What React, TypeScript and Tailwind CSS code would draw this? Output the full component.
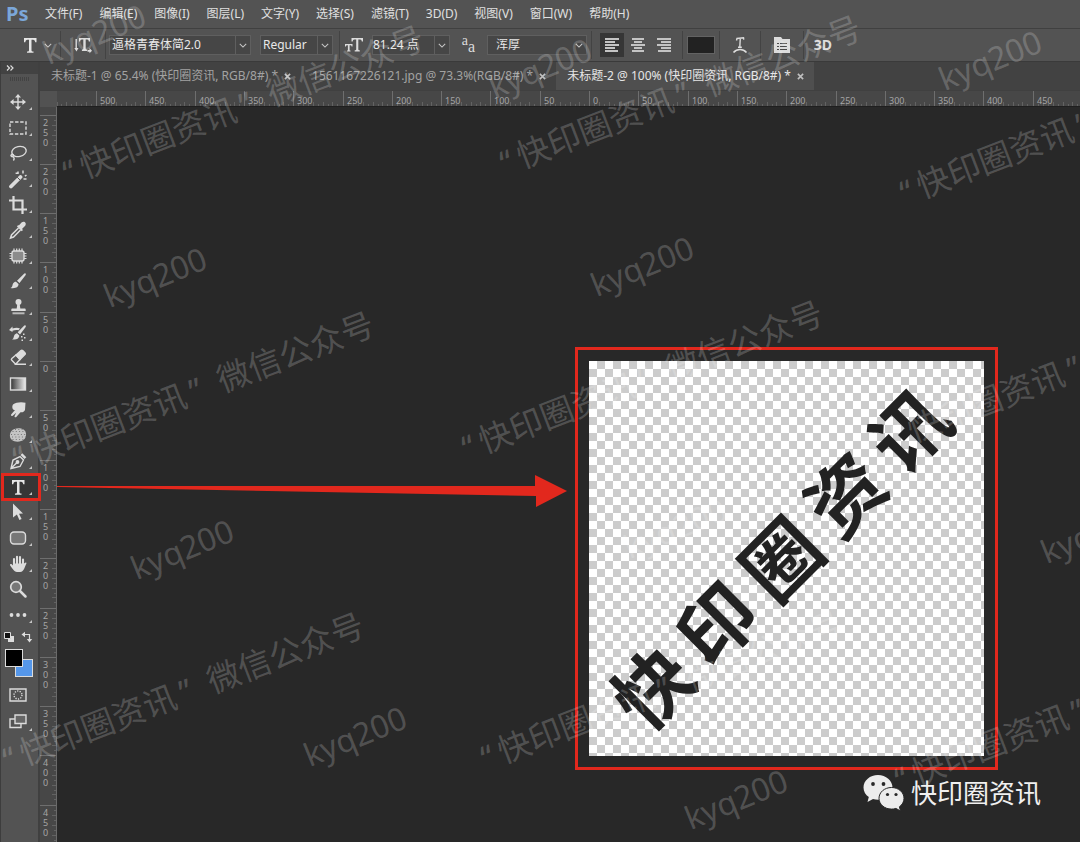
import type { ReactNode } from "react";

const menus = [
  "文件(F)",
  "编辑(E)",
  "图像(I)",
  "图层(L)",
  "文字(Y)",
  "选择(S)",
  "滤镜(T)",
  "3D(D)",
  "视图(V)",
  "窗口(W)",
  "帮助(H)",
];

const tabs = [
  { title: "未标题-1 @ 65.4% (快印圈资讯, RGB/8#) *", active: false },
  { title: "1561167226121.jpg @ 73.3%(RGB/8#) *", active: false },
  { title: "未标题-2 @ 100% (快印圈资讯, RGB/8#) *", active: true },
];

const Icon = ({ children }: { children: ReactNode }) => (
  <svg
    viewBox="0 0 20 20"
    className="h-5 w-5"
    fill="none"
    stroke="#dcdcdc"
    strokeWidth="1.4"
    aria-hidden="true"
  >
    {children}
  </svg>
);

const tools: { name: string; icon: ReactNode; plain?: boolean }[] = [
  {
    name: "Move",
    icon: (
      <>
        <path d="M10 4v12M4 10h12" />
        <path
          d="M10 2l3 3.6H7zM10 18l3-3.6H7zM2 10l3.6-3v6zM18 10l-3.6-3v6z"
          fill="#dcdcdc"
          stroke="none"
        />
      </>
    ),
  },
  {
    name: "Marquee",
    icon: <path d="M2 4h16v12H2z" strokeDasharray="3.4 1.7" />,
  },
  {
    name: "Lasso",
    icon: (
      <>
        <ellipse cx="11" cy="8.5" rx="7.3" ry="5" transform="rotate(-12 11 8.5)" />
        <path d="M4.5 11.5c-1.5 0-2 1-1.2 1.7s2.2.2 2.2-.8-.5-1-1-.9M4.5 13.5c2 .8 2 2.5.9 4" />
      </>
    ),
  },
  {
    name: "Magic Wand",
    icon: (
      <>
        <path d="M3 17.5L12.5 8" strokeWidth="3.8" strokeLinecap="round" />
        <path d="M9.2 8.2l3.4 3.4" stroke="#535353" strokeWidth="1" />
        <path d="M10 2.6v2.4M15 1.6v3M18.5 6l-1.6 1.2M15.5 10h3M7.6 4.3h2.6" strokeWidth="1.5" />
      </>
    ),
  },
  {
    name: "Crop",
    icon: <path d="M5.5 1v13.5H19M1 5.5h13.5V19" strokeWidth="2.2" />,
  },
  {
    name: "Eyedropper",
    icon: (
      <>
        <path d="M10.5 8L3.5 15l-1 3 3-1 7-7" strokeWidth="1.5" />
        <path
          d="M9 6.5l4.7 4.7 1.3-1.3-1-1 3.2-3.2c1.8-2.5-.9-5.2-3.4-3.4L10.8 5.5l-.7-.5z"
          fill="#dcdcdc"
          stroke="none"
        />
      </>
    ),
  },
  {
    name: "Patch",
    icon: (
      <>
        <rect x="4" y="5" width="12" height="10" rx="2" fill="#8b8b8b" />
        <path
          d="M6 2.5v2.5M8.7 2.5v2.5M11.3 2.5v2.5M14 2.5v2.5M6 15v2.5M8.7 15v2.5M11.3 15v2.5M14 15v2.5M1.5 7.5H4M1.5 10H4M1.5 12.5H4M16 7.5h2.5M16 10h2.5M16 12.5h2.5"
          strokeWidth="1.2"
        />
      </>
    ),
  },
  {
    name: "Brush",
    icon: (
      <g fill="#dcdcdc" stroke="none">
        <path d="M17.5 2.5c.6.4.4 1 0 1.7L11.5 12 9 9.7l6.8-6.8c.6-.6 1.2-.8 1.7-.4z" />
        <path d="M8 10.7l2.5 2.4c.3 2.7-2.500 4.700-8 3.900 2.200-1 1.700-3 2.700-4.800.6-1 1.700-1.600 2.800-1.500z" />
      </g>
    ),
  },
  {
    name: "Clone Stamp",
    icon: (
      <g fill="#dcdcdc" stroke="none">
        <circle cx="10.5" cy="5" r="3" />
        <path d="M9.3 7h2.4l.6 4.5h4.2c.8 0 1.2.5 1.2 1.3V14H3.3v-1.2c0-.8.5-1.3 1.2-1.3h4.2z" />
        <path d="M4.5 15.3h12v2h-12z" opacity=".75" />
      </g>
    ),
  },
  {
    name: "History Brush",
    icon: (
      <g fill="#dcdcdc" stroke="none">
        <path d="M17.5 2.5c.6.4.4 1 0 1.7L12 11.5 9.7 9.2l6.1-6.3c.6-.6 1.2-.8 1.7-.4zM9 10.2l2.3 2.3c0 2.6-2.3 4.5-7.3 4 2-1 1.5-2.8 2.3-4.3.6-1 1.7-1.9 2.7-2z" />
        <path d="M1 7L4.500 3.500v2c3-1 5.500-1 7.500 0L10.500 7.200C8.500 6.700 6.500 6.900 4.500 7.800V9z" />
        <path d="M15 10.5h1.5V12H15zM13 13h1.5v1.5H13zM16 14h1.5v1.5H16zM13.5 16.5H15V18h-1.5z" />
      </g>
    ),
  },
  {
    name: "Eraser",
    icon: (
      <>
        <path
          d="M8 7l5-4.5c.6-.5 1.2-.4 1.7.1l2.2 2.2c.6.6.6 1.2 0 1.8L12 11.5z"
          fill="#dcdcdc"
        />
        <path d="M8 7l4 4.5-3.5 3.7c-.6.6-1.2.6-1.8 0l-2.9-2.9c-.6-.6-.6-1.2 0-1.8zM6.5 16.3H18" />
      </>
    ),
  },
  {
    name: "Gradient",
    icon: (
      <>
        <defs>
          <linearGradient id="toolGradient">
            <stop offset="0" stopColor="#333" />
            <stop offset="1" stopColor="#eee" />
          </linearGradient>
        </defs>
        <rect x="2.5" y="4" width="15" height="12" fill="url(#toolGradient)" />
      </>
    ),
  },
  {
    name: "Smudge",
    icon: (
      <path
        d="M5 4.5C8 2 14 1.800 17.500 2.800L17 10c-1 2-2.500 2.500-4.500 2.200L8.300 17c-.8.800-2.200.2-1.700-1.100l1.600-3.200-3.500 3c-1.200.8-2.300-.4-1.400-1.500L7 10c-2.200.4-3.600-3-2-5.500z"
        fill="#dcdcdc"
        stroke="none"
      />
    ),
  },
  {
    name: "Sponge",
    icon: (
      <>
        <path
          d="M3.5 6C6 3 12 2.5 15.5 4.5s3.2 7.5.5 10-9 3-12 .5-2.5-6.5-.5-9z"
          fill="#c4c4c4"
          stroke="none"
        />
        <path
          d="M4.500 6.500h12M3 9.500h15M4 12h14M4.500 14.500h12M7 4.500h8"
          stroke="#757575"
          strokeWidth="1"
          strokeDasharray="1 2.300"
        />
      </>
    ),
  },
  {
    name: "Pen",
    icon: (
      <>
        <path d="M3 17.500l2-8.500 7-3.500 3.500 3.500-3.500 6.500zM3 17.500l6-6" />
        <circle cx="9.5" cy="11" r="1.2" fill="#dcdcdc" />
        <path d="M12.5 4l1.8-1.8 4 4L16.5 8z" fill="#dcdcdc" stroke="none" />
      </>
    ),
  },
  {
    name: "Type",
    icon: (
      <path
        d="M4 3h12.5v4.3H15.2C15 5.5 14.5 4.7 13 4.7h-1.5v10.6c0 .9.4 1.2 2 1.3v1.2H7v-1.2c1.600-.1 2-.4 2-1.300V4.700H7.500C6 4.700 5.500 5.500 5.300 7.300H4z"
        fill="#e6e6e6"
        stroke="none"
      />
    ),
  },
  {
    name: "Path Selection",
    icon: (
      <path
        d="M5 1.5l10 10-4 .2 2.600 5.300-2.200 1-2.500-5.400L5 15.500z"
        fill="#dcdcdc"
        stroke="none"
      />
    ),
  },
  {
    name: "Rounded Rectangle",
    icon: <rect x="2.5" y="4" width="15" height="12" rx="3.5" fill="#777" />,
  },
  {
    name: "Hand",
    icon: (
      <>
        <path
          d="M6 10.5V5M9 10V2.800M12 10V3M15 11V5.500"
          strokeWidth="2.1"
          strokeLinecap="round"
        />
        <path
          d="M5 9.5h11l1.300-.8c1-.4 1.400.5.9 1.300-1.700 3-2 7.500-6 8H9c-3-.3-5-4-6.800-6.500-.7-1.200.5-2 1.500-1.300L5 11.500z"
          fill="#dcdcdc"
          stroke="none"
        />
      </>
    ),
  },
  {
    name: "Zoom",
    plain: true,
    icon: (
      <>
        <circle cx="8" cy="8" r="5.3" strokeWidth="1.7" fill="#777" />
        <path d="M12 12l5.5 5.5" strokeWidth="2.5" strokeLinecap="round" />
      </>
    ),
  },
  {
    name: "Edit Toolbar",
    icon: (
      <g fill="#dcdcdc" stroke="none">
        <circle cx="3.5" cy="10" r="1.9" />
        <circle cx="10" cy="10" r="1.9" />
        <circle cx="16.5" cy="10" r="1.9" />
      </g>
    ),
  },
];

// screen pixels covered by 50 ruler units
const RULER_STEP = 49.3;
const columnMarks = Array.from({ length: 20 }, (_, i) => i - 10);
const rowMarks = Array.from({ length: 15 }, (_, i) => i - 5);
const minorMarks = [1, 2, 3, 4, 5, 6, 7, 8, 9];

const HorizontalRuler = () => (
  <svg className="h-4 flex-1 border-b border-[#1f1f1f] bg-[#474747]" aria-hidden="true">
    {minorMarks.map((m) => (
      <path
        key={m}
        d={`M${Math.round(39 - (m * RULER_STEP) / 10)}.5 ${m % 2 ? 13 : 11}v5`}
        stroke="#626262"
      />
    ))}
    {columnMarks.map((n) => {
      const x = Math.round(532 + n * RULER_STEP);
      return (
        <g key={n}>
          <path d={`M${x}.5 0v16`} stroke="#6e6e6e" />
          {minorMarks.map((m) => (
            <path
              key={m}
              d={`M${Math.round(x + (m * RULER_STEP) / 10)}.5 ${m % 2 ? 13 : 11}v5`}
              stroke="#626262"
            />
          ))}
          <text x={x + 4} y="13" fill="#a5a5a5" fontSize="9">
            {Math.abs(n * 50)}
          </text>
        </g>
      );
    })}
  </svg>
);

const VerticalRuler = () => (
  <svg
    className="h-full w-[17px] shrink-0 border-r border-[#6a6a6a] bg-[#474747]"
    aria-hidden="true"
  >
    {rowMarks.map((n) => {
      const y = Math.round(254 + n * RULER_STEP);
      return (
        <g key={n}>
          <path d={`M0 ${y}.5h17`} stroke="#6e6e6e" />
          {minorMarks.map((m) => (
            <path
              key={m}
              d={`M${m % 2 ? 14 : 12} ${Math.round(y + (m * RULER_STEP) / 10)}.5h5`}
              stroke="#626262"
            />
          ))}
          {String(Math.abs(n * 50))
            .split("")
            .map((digit, i) => (
              <text key={i} x="3" y={y + 11 + i * 10} fill="#a5a5a5" fontSize="9">
                {digit}
              </text>
            ))}
        </g>
      );
    })}
  </svg>
);

const Chevron = () => (
  <svg viewBox="0 0 10 6" className="h-[5px] w-2" fill="none" stroke="#c8c8c8" aria-hidden="true">
    <path d="M1 1l4 4 4-4" strokeWidth="1.3" />
  </svg>
);

const Separator = () => <div className="h-7 w-px shrink-0 bg-[#434343]" />;

const SelectBox = ({
  label,
  value,
  className,
  divided = true,
}: {
  label: string;
  value: string;
  className: string;
  divided?: boolean;
}) => (
  <div className={`relative h-5 shrink-0 border border-[#5f5f5f] bg-[#464646] ${className}`}>
    <select
      aria-label={label}
      defaultValue={value}
      className="h-full w-full appearance-none bg-transparent text-[#e8e8e8] outline-none"
    >
      <option>{value}</option>
    </select>
    <span
      className={`pointer-events-none absolute inset-y-0 right-0 flex w-[15px] items-center justify-center ${
        divided ? "border-l border-[#5f5f5f]" : ""
      }`}
    >
      <Chevron />
    </span>
  </div>
);

const OptionsBar = () => (
  <div className="flex h-[34px] shrink-0 items-center border-y border-t-[#404040] border-b-[#3a3a3a]">
    <button
      aria-label="Type tool presets"
      className="flex h-full w-[60px] items-center gap-1 pl-5"
    >
      <Icon>{tools[15].icon}</Icon>
      <Chevron />
    </button>
    <Separator />
    <button
      aria-label="Toggle text orientation"
      className="flex h-full w-11 items-center justify-center"
    >
      <svg viewBox="0 0 18 18" className="h-[18px] w-[18px]" fill="#dcdcdc" aria-hidden="true">
        <path d="M5 2h11v3.5h-1.2c-.2-1.2-.6-1.9-1.6-1.9h-1.5v8.9c0 .7.4 1 1.4 1V15H7.9v-1.5c1 0 1.4-.3 1.4-1V3.6H7.8c-1 0-1.4.7-1.6 1.9H5z" />
        <path d="M1.500 3h1.400v9H4.500l-2 3.500L.3 12h1.200zM13.500 14h2v-2l2.500 2.700-2.500 2.600v-1.600h-2z" />
      </svg>
    </button>
    <Separator />
    <SelectBox label="Font family" value="逼格青春体简2.0" className="ml-[3px] w-[142px] pl-[2px]" />
    <SelectBox label="Font style" value="Regular" className="ml-[9px] w-[73px] pl-[2px]" />
    <div className="ml-[6px]">
      <Separator />
    </div>
    <svg
      viewBox="0 0 18 16"
      className="ml-[5px] mr-[9px] h-4 w-[18px]"
      fill="#dcdcdc"
      aria-hidden="true"
    >
      <path d="M6.5 1H18v3.6h-1.2c-.2-1.3-.6-2-1.6-2h-1.9v9.6c0 .8.4 1 1.5 1.1v1.2H9.7v-1.2c1.1-.1 1.5-.3 1.5-1.1V2.6H9.3c-1 0-1.4.7-1.6 2H6.5z" />
      <path d="M0 7h7.5v2.5h-.9c-.1-.8-.4-1.2-1-1.2h-1v4.7c0 .4.2.6.9.6v.9H2v-.9c.7 0 .9-.2.9-.6V8.300h-1c-.6 0-.9.4-1 1.200H0z" />
    </svg>
    <div className="flex h-5 w-[78px] shrink-0 border border-[#5f5f5f] bg-[#464646]">
      <input
        aria-label="Font size"
        defaultValue="81.24 点"
        className="min-w-0 flex-1 bg-transparent text-[#e8e8e8] outline-none"
      />
      <button
        aria-label="Font size list"
        className="flex w-[15px] items-center justify-center border-l border-[#5f5f5f]"
      >
        <Chevron />
      </button>
    </div>
    <span className="flex h-5 w-[37px] justify-center font-['Liberation_Serif',serif] leading-4 text-[#dcdcdc]">
      <span className="text-sm leading-3">a</span>
      <span className="self-end text-base leading-4">a</span>
    </span>
    <SelectBox label="Anti-aliasing" value="浑厚" className="w-[100px] pl-2" divided={false} />
    <div className="ml-1">
      <Separator />
    </div>
    <div className="ml-2 flex gap-[2px]">
      {[
        { name: "Left align", d: "M0 1h14M0 4h10M0 7h14M0 10h10M0 13h13" },
        { name: "Center align", d: "M1 1h12M3 4h8M0 7h14M3 10h8M1 13h12" },
        { name: "Right align", d: "M0 1h14M4 4h10M0 7h14M4 10h10M1 13h13" },
      ].map((align, i) => (
        <button
          key={align.name}
          aria-label={align.name}
          className={`flex h-6 w-6 items-center justify-center ${i === 0 ? "bg-[#363636]" : ""}`}
        >
          <svg
            viewBox="0 0 14 14"
            className="h-3.5 w-3.5"
            stroke="#c4c4c4"
            strokeWidth="2"
            aria-hidden="true"
          >
            <path d={align.d} />
          </svg>
        </button>
      ))}
    </div>
    <div className="ml-[6px]">
      <Separator />
    </div>
    <button
      aria-label="Text color"
      className="mx-1 h-[18px] w-7 border border-[#636363] bg-[#222222]"
    />
    <Separator />
    <button aria-label="Warp text" className="flex h-full w-10 items-center justify-center">
      <svg viewBox="0 0 16 18" className="h-[18px] w-4" fill="none" stroke="#dcdcdc" aria-hidden="true">
        <path d="M4.500 4.500l.5-2 6.500-.8.3 2M8.300 2L7.800 11M6 11.200h3.800" strokeWidth="1.4" />
        <path d="M1.5 16.5c3.5-4 9.5-4 13 0" strokeWidth="1.6" />
      </svg>
    </button>
    <Separator />
    <button
      aria-label="Character panel"
      className="flex h-full w-[42px] items-center justify-center"
    >
      <svg viewBox="0 0 16 16" className="h-4 w-4" aria-hidden="true">
        <path d="M0 0h7l1.5 2H16v14H0z" fill="#dcdcdc" />
        <path
          d="M3 6.5h2M6 6.5h7M3 9.5h2M6 9.5h7M3 12.5h2M6 12.5h7"
          stroke="#4a4a4a"
        />
      </svg>
    </button>
    <Separator />
    <button
      aria-label="Update 3D"
      className="w-[38px] text-center text-sm font-bold text-[#dcdcdc]"
    >
      3D
    </button>
  </div>
);

const Toolbar = () => (
  <aside className="flex w-[38px] shrink-0 flex-col border-l border-[#3d3d3d] bg-[#535353]">
    <button
      aria-label="Expand panel"
      className="flex h-3 items-center bg-[#424242] pl-[5px]"
    >
      <svg viewBox="0 0 8 6" className="h-[6px] w-2" fill="none" stroke="#dcdcdc" aria-hidden="true">
        <path d="M1 .5L3.5 3 1 5.5M4.5.5L7 3 4.5 5.5" strokeWidth="1.2" />
      </svg>
    </button>
    <div className="mx-auto mt-[3px] h-1 w-5 bg-[repeating-linear-gradient(90deg,#434343_0_1px,transparent_1px_2px)]" />
    <div className="mt-[9px] flex h-[537px] flex-col justify-between">
      {tools.map((tool) => (
        <button
          key={tool.name}
          aria-label={tool.name}
          className={`relative flex h-6 items-center pl-[7px] ${
            tool.name === "Type" ? "bg-[#363636]" : ""
          }`}
        >
          <Icon>{tool.icon}</Icon>
          {!tool.plain && (
            <svg
              viewBox="0 0 4 4"
              className="absolute bottom-1 right-[6px] h-[3px] w-[3px]"
              aria-hidden="true"
            >
              <path d="M4 0v4H0z" fill="#c4c4c4" />
            </svg>
          )}
          {tool.name === "Type" && (
            <span className="absolute -inset-y-[2px] left-0 -right-[3px] border-[3px] border-[#e2281d]" />
          )}
        </button>
      ))}
    </div>
    <div className="mt-1 flex justify-between pl-[3px] pr-[5px]">
      <button aria-label="Default colors">
        <svg viewBox="0 0 10 10" className="h-[10px] w-[10px]" aria-hidden="true">
          <path d="M4 4h6v6H4z" fill="#dcdcdc" />
          <path d="M.5.5h6v6h-6z" fill="#111" stroke="#dcdcdc" />
        </svg>
      </button>
      <button aria-label="Swap colors">
        <svg viewBox="0 0 12 12" className="h-3 w-3" fill="none" stroke="#dcdcdc" aria-hidden="true">
          <path d="M3 3.5h5.500V9" strokeWidth="1.2" />
          <path d="M4 .8v5.400L.5 3.500zM5.800 8h5.400L8.500 11.500z" fill="#dcdcdc" stroke="none" />
        </svg>
      </button>
    </div>
    <div className="relative ml-1 mt-[6px] h-7 w-7">
      <button
        aria-label="Background color"
        className="absolute bottom-0 right-0 h-[18px] w-[18px] border border-[#dcdcdc] bg-[#5597ea]"
      />
      <button
        aria-label="Foreground color"
        className="absolute left-0 top-0 h-[18px] w-[18px] border border-[#dcdcdc] bg-black"
      />
    </div>
    <button aria-label="Quick mask" className="mt-2 pl-[7px]">
      <Icon>
        <path d="M2 4h16v12H2z" />
        <circle cx="10" cy="10" r="4" strokeDasharray="1.2 1.3" />
      </Icon>
    </button>
    <button aria-label="Screen mode" className="relative mt-[6px] pl-[7px]">
      <Icon>
        <path d="M2 8h11v8.5H2z" />
        <path d="M7 4h11v8.5H7z" fill="#666" />
      </Icon>
      <svg
        viewBox="0 0 4 4"
        className="absolute bottom-0 right-[6px] h-[3px] w-[3px]"
        aria-hidden="true"
      >
        <path d="M4 0v4H0z" fill="#c4c4c4" />
      </svg>
    </button>
  </aside>
);

const Tabs = () => (
  <div className="flex h-7 shrink-0 items-stretch bg-[#424242]">
    {tabs.map((tab) => (
      <div
        key={tab.title}
        className={`flex items-center gap-1.5 pl-[11px] pr-[10px] ${
          tab.active ? "bg-[#4f4f4f] text-[#e6e6e6]" : "text-[#a2a2a2]"
        }`}
      >
        <button className="whitespace-nowrap">{tab.title}</button>
        <button aria-label="Close tab">
          <svg
            viewBox="0 0 8 8"
            className="h-[7px] w-[7px]"
            stroke="#c0c0c0"
            strokeWidth="1.8"
            aria-hidden="true"
          >
            <path d="M1 1l6 6M7 1L1 7" />
          </svg>
        </button>
      </div>
    ))}
  </div>
);

const Artboard = () => (
  <>
    <div className="absolute left-[518px] top-[240px] border-[3px] border-[#e2281d] p-[11px]">
      <div className="flex h-[395px] w-[395px] items-center justify-center overflow-hidden bg-[repeating-conic-gradient(#cccccc_0_25%,#ffffff_0_50%)] bg-size-[16px_16px] pr-3">
        <div className="flex -rotate-45 gap-[15px] text-[76px] leading-none font-bold text-[#222222]">
          {["快", "印", "圈", "资", "讯"].map((char) => (
            <span key={char}>{char}</span>
          ))}
        </div>
      </div>
    </div>
    <svg
      viewBox="0 0 510 34"
      className="absolute left-0 top-[367px] h-[34px] w-[510px]"
      fill="#e2281d"
      aria-hidden="true"
    >
      <path d="M0 12L478 12V1l32 16-31 16V22L0 13z" />
    </svg>
    <div className="absolute left-[806px] top-[666px] flex items-center gap-[6px]">
      <svg viewBox="0 0 42 38" className="h-[38px] w-[42px]" aria-hidden="true">
        <path
          d="M15 1C7 1 .5 6.500.5 13.500c0 4 2 7.300 5.300 9.600L4.500 28l5.500-3c1.600.5 3.300.8 5 .8 8 0 14.500-5.500 14.500-12.300S23 1 15 1z"
          fill="#ececec"
        />
        <path
          d="M28.500 13.500c-7 0-12.500 4.800-12.500 10.800s5.500 10.800 12.500 10.800c1.500 0 3-.2 4.400-.7l4.600 2.600-1.100-4.200c2.900-2 4.600-5.100 4.600-8.500 0-6-5.500-10.800-12.500-10.800z"
          fill="#ececec"
          stroke="#282828"
        />
        <g fill="#282828">
          <circle cx="10" cy="10" r="1.9" />
          <circle cx="20.5" cy="10" r="1.9" />
          <circle cx="24.5" cy="20.5" r="1.6" />
          <circle cx="33" cy="20.5" r="1.6" />
        </g>
      </svg>
      <span className="whitespace-nowrap text-[26px] leading-10 text-[#f0f0f0]">快印圈资讯</span>
    </div>
  </>
);

const accountMarks = [
  "left-[64px] top-[157px]",
  "left-[501px] top-[147px]",
  "left-[901px] top-[177px]",
  "left-[14px] top-[443px]",
  "left-[463px] top-[432px]",
  "left-[892px] top-[421px]",
  "left-[4px] top-[744px]",
  "left-[482px] top-[742px]",
  "left-[896px] top-[764px]",
];

const idMarks = [
  "left-[40px] top-[18px]",
  "left-[486px] top-[52px]",
  "left-[936px] top-[44px]",
  "left-[101px] top-[261px]",
  "left-[588px] top-[250px]",
  "left-[621px] top-[512px]",
  "left-[128px] top-[533px]",
  "left-[1038px] top-[517px]",
  "left-[301px] top-[720px]",
  "left-[682px] top-[783px]",
];

const Watermarks = () => (
  <div className="pointer-events-none absolute inset-0 overflow-hidden text-white/20">
    {accountMarks.map((place) => (
      <span
        key={place}
        className={`absolute flex origin-left -rotate-[21deg] gap-[6px] whitespace-nowrap text-[33px] leading-none ${place}`}
      >
        <span>“</span>
        <span>快印圈资讯</span>
        <span className="mr-3">”</span>
        <span>微信公众号</span>
      </span>
    ))}
    {idMarks.map((place) => (
      <span
        key={place}
        className={`absolute -rotate-[22deg] whitespace-nowrap text-[32px] leading-none ${place}`}
      >
        kyq200
      </span>
    ))}
  </div>
);

export default function App() {
  return (
    <div className="relative flex h-screen flex-col overflow-hidden bg-[#535353] font-['Noto_Sans','Noto_Sans_CJK_SC',sans-serif] text-xs text-[#e0e0e0]">
      <nav className="flex h-7 shrink-0 items-center gap-[17px] pl-1.5">
        <span className="w-[22px] text-[20px] leading-none font-bold text-[#7ba7d9]">Ps</span>
        {menus.map((menu) => (
          <button key={menu} className="whitespace-nowrap">
            {menu}
          </button>
        ))}
      </nav>
      <OptionsBar />
      <div className="flex min-h-0 flex-1">
        <Toolbar />
        <main className="flex min-w-0 flex-1 flex-col bg-[#404040] pl-[2px]">
          <Tabs />
          <div className="mt-px flex h-4 shrink-0">
            <div className="w-[17px] bg-[#525252]" />
            <HorizontalRuler />
          </div>
          <div className="flex min-h-0 flex-1">
            <VerticalRuler />
            <div className="relative min-w-0 flex-1 overflow-hidden bg-[#282828]">
              <Artboard />
            </div>
          </div>
        </main>
      </div>
      <Watermarks />
    </div>
  );
}
